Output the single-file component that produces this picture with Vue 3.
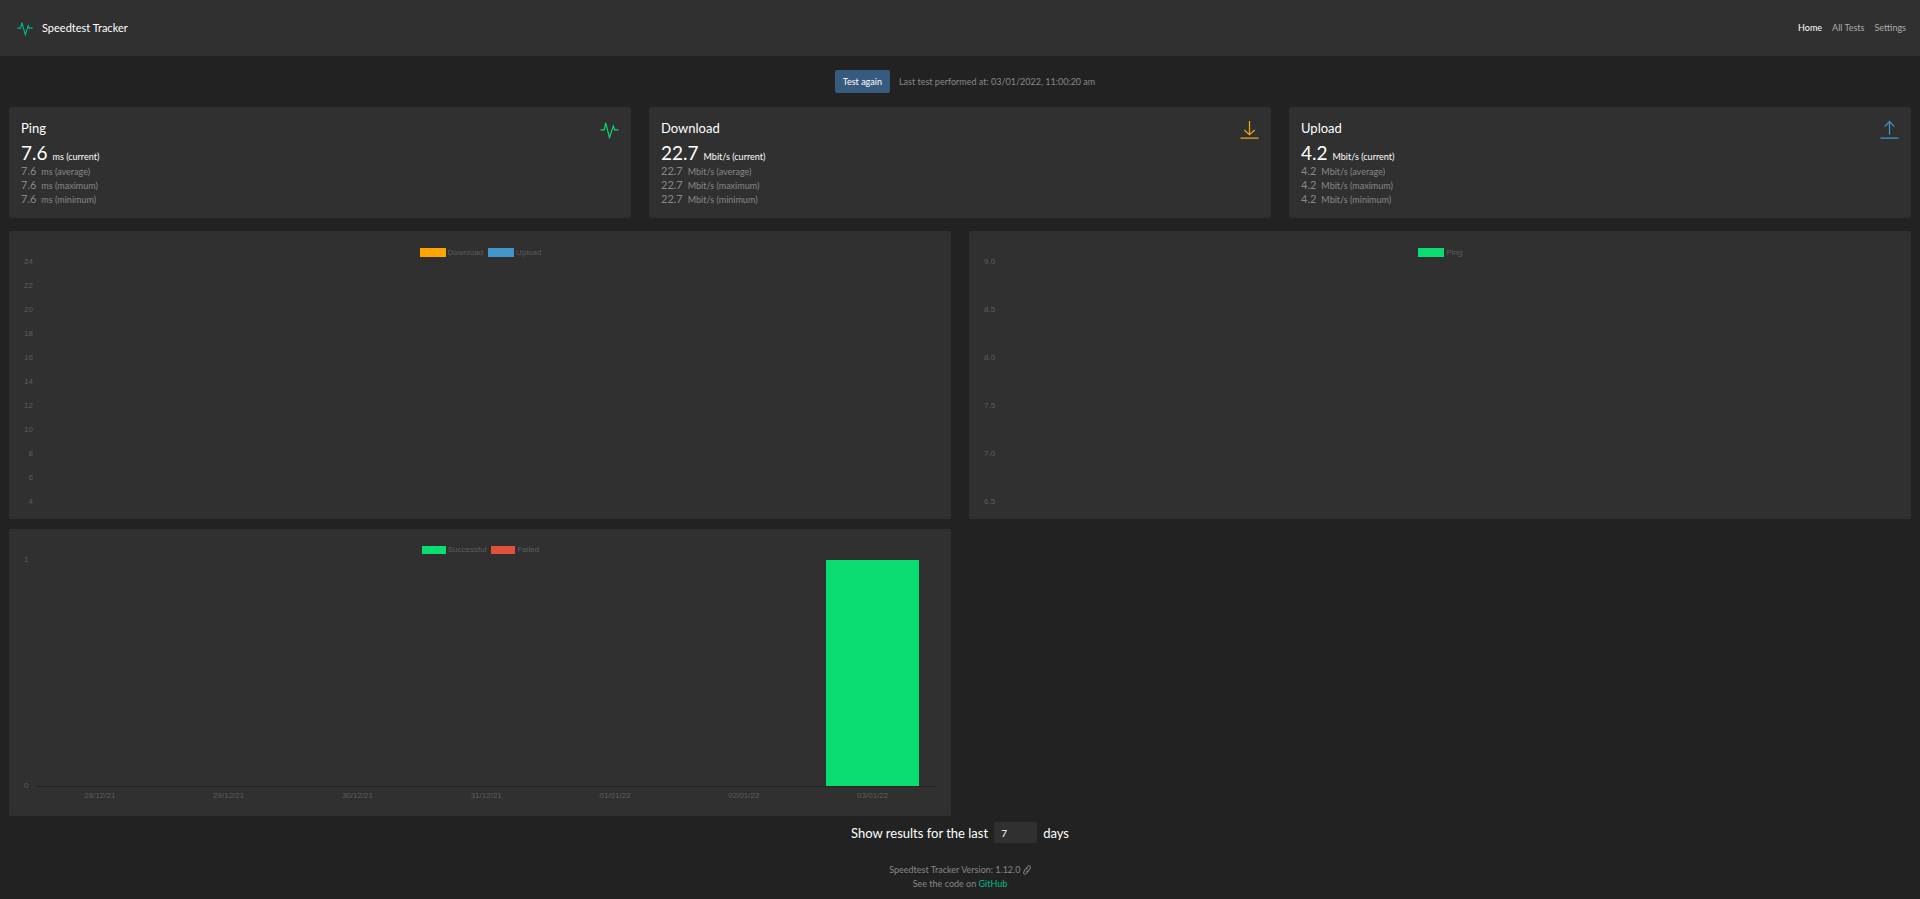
<script setup>
import { ref } from 'vue'

const days = ref(7)

const links = [
  { text: 'Home', active: true },
  { text: 'All Tests', active: false },
  { text: 'Settings', active: false },
]

const stats = [
  { title: 'Ping', unit: 'ms', value: '7.6', icon: 'pulse' },
  { title: 'Download', unit: 'Mbit/s', value: '22.7', icon: 'down' },
  { title: 'Upload', unit: 'Mbit/s', value: '4.2', icon: 'up' },
]

const lineCharts = [
  {
    name: 'Speed',
    legend: [
      { text: 'Download', tone: 'orange' },
      { text: 'Upload', tone: 'blue' },
    ],
    ticks: ['24', '22', '20', '18', '16', '14', '12', '10', '8', '6', '4'],
  },
  {
    name: 'Ping',
    legend: [{ text: 'Ping', tone: 'green' }],
    ticks: ['9.0', '8.5', '8.0', '7.5', '7.0', '6.5'],
  },
]

const results = [
  { date: '28/12/21', count: 0 },
  { date: '29/12/21', count: 0 },
  { date: '30/12/21', count: 0 },
  { date: '31/12/21', count: 0 },
  { date: '01/01/22', count: 0 },
  { date: '02/01/22', count: 0 },
  { date: '03/01/22', count: 1 },
]
</script>

<template>
  <div class="page">
    <header class="navbar">
      <a class="brand" href="#">
        <svg class="brand-icon" viewBox="0 0 20 20" aria-hidden="true">
          <path d="M0.5 9.5H4.5L6 2.5L10.5 18L14 6.5L15.5 9.5H19.5" />
        </svg>
        <span>Speedtest Tracker</span>
      </a>
      <nav class="links">
        <a v-for="l in links" :key="l.text" href="#" :class="{ active: l.active }">{{ l.text }}</a>
      </nav>
    </header>

    <main>
      <div class="actions">
        <button type="button" class="test">Test again</button>
        <span class="last">Last test performed at: 03/01/2022, 11:00:20 am</span>
      </div>

      <section class="stats">
        <article v-for="s in stats" :key="s.title" class="card stat">
          <div class="stat-head">
            <h2>{{ s.title }}</h2>
            <svg class="stat-icon" :class="s.icon" viewBox="0 0 20 20" aria-hidden="true">
              <path v-if="s.icon === 'pulse'" d="M0.5 10.5H4.5L6 3L10 18.5L14 6.5L15.5 10.5H19.5" />
              <path v-else-if="s.icon === 'down'" d="M10 1V15.5M4.5 10.5L10 15.5L15.5 10.5M0.5 19H19.5" />
              <path v-else d="M10 15.5V1.5M5 7L10 1.5L15 7M0.5 19H19.5" />
            </svg>
          </div>
          <p class="current"><span class="num">{{ s.value }}</span><span>{{ s.unit }} (current)</span></p>
          <p v-for="k in ['average', 'maximum', 'minimum']" :key="k" class="other">
            <span class="num">{{ s.value }}</span><span>{{ s.unit }} ({{ k }})</span>
          </p>
        </article>
      </section>

      <section class="charts">
        <article v-for="c in lineCharts" :key="c.name" class="card chart">
          <div class="legend">
            <span v-for="l in c.legend" :key="l.text" class="key"><i :class="l.tone"></i>{{ l.text }}</span>
          </div>
          <div class="ticks line-ticks">
            <span v-for="t in c.ticks" :key="t">{{ t }}</span>
          </div>
        </article>

        <article class="card chart">
          <div class="legend small">
            <span class="key"><i class="green"></i>Successful</span>
            <span class="key"><i class="red"></i>Failed</span>
          </div>
          <div class="bar-body">
            <div class="ticks bar-ticks"><span>1</span><span>0</span></div>
            <div class="plot">
              <div class="bars">
                <div v-for="r in results" :key="r.date" class="slot">
                  <div class="bar" :style="{ height: r.count * 100 + '%' }"></div>
                </div>
              </div>
              <div class="dates">
                <span v-for="r in results" :key="r.date">{{ r.date }}</span>
              </div>
            </div>
          </div>
        </article>
      </section>

      <div class="range">
        <label for="days">Show results for the last</label>
        <input id="days" v-model="days" type="text" inputmode="numeric" />
        <span>days</span>
      </div>
    </main>

    <footer>
      <p>
        Speedtest Tracker Version: 1.12.0
        <svg class="link-icon" viewBox="0 0 8 10" aria-hidden="true">
          <path d="M3 4.5L4.5 1.5Q5.5 0.2 6.8 1Q7.8 1.8 7.2 3L5.5 6.2Q4.6 7.4 3.4 6.6M5 5.2L3.6 8.4Q2.6 9.8 1.2 9Q0.2 8.2 0.8 7L2.5 3.8Q3.4 2.6 4.6 3.4" />
        </svg>
      </p>
      <p>See the code on <a href="#">GitHub</a></p>
    </footer>
  </div>
</template>

<style>
body {
  margin: 0;
  background: #222;
}
</style>

<style scoped>
.page {
  font-family: Lato, sans-serif;
  font-size: 9px;
  line-height: 14px;
  color: #fff;
}
h2,
p {
  margin: 0;
  font-weight: 400;
}
a {
  text-decoration: none;
}
svg {
  fill: none;
  stroke: currentColor;
}
.navbar {
  display: flex;
  align-items: center;
  justify-content: space-between;
  height: 56px;
  padding: 0 14px 0 17px;
  background: #303030;
}
.brand {
  display: flex;
  align-items: center;
  gap: 9px;
  color: #fff;
  font-size: 11px;
}
.brand-icon {
  width: 16px;
  height: 17px;
  color: #00bc8c;
  stroke-width: 1.4;
}
.links {
  display: flex;
  gap: 10px;
}
.links a {
  color: #acacac;
}
.links a.active {
  color: #fff;
}
.actions {
  display: flex;
  align-items: center;
  justify-content: center;
  gap: 9px;
  padding: 14px 0 14px 10px;
}
.test {
  height: 23px;
  padding: 0 8px;
  border: 0;
  border-radius: 2px;
  background: #375a7f;
  color: #fff;
  font: inherit;
}
.last {
  color: #888;
}
.card {
  border-radius: 2px;
  background: #303030;
}
.stats {
  display: grid;
  grid-template-columns: repeat(3, 1fr);
  gap: 18px;
  padding: 0 9px;
}
.stat {
  padding: 13px 12px 12px;
}
.stat-head {
  display: flex;
  justify-content: space-between;
  height: 22px;
}
.stat-head h2 {
  font-size: 13px;
  line-height: 16px;
}
.stat-icon {
  width: 19px;
  height: 19px;
  stroke-width: 1.3;
}
.pulse {
  color: #09d66f;
}
.down {
  color: #efa21a;
}
.up {
  color: #4195c9;
}
.current,
.other {
  display: flex;
  align-items: baseline;
  gap: 5px;
}
.current {
  height: 22px;
  line-height: 22px;
}
.current .num {
  font-size: 19px;
}
.other {
  height: 14px;
  color: #888;
}
.other .num {
  font-size: 11px;
}
.charts {
  display: grid;
  grid-template-columns: repeat(2, 1fr);
  gap: 10px 18px;
  padding: 13px 9px 0;
}
.chart {
  padding: 17px 14px 13px 15px;
  color: #5e5e5e;
  font-family: "Liberation Sans", Arial, sans-serif;
  font-size: 8px;
  line-height: 8px;
}
.legend {
  display: flex;
  justify-content: center;
  gap: 5px;
}
.key {
  display: flex;
  align-items: center;
  gap: 2px;
}
.key i {
  width: 26px;
  height: 9px;
}
.small .key i {
  width: 24px;
  height: 8px;
}
.green {
  background: #09dd72;
}
.orange {
  background: #ffa500;
}
.blue {
  background: #4195c9;
}
.red {
  background: #e2503c;
}
.ticks {
  display: flex;
  flex-direction: column;
  justify-content: space-between;
  width: max-content;
  text-align: right;
}
.line-ticks {
  height: 248px;
  margin-top: 1px;
}
.bar-body {
  display: flex;
  gap: 7px;
  margin: 2px 0 3px;
}
.bar-ticks {
  height: 234px;
}
.plot {
  flex: 1;
  padding-top: 4px;
}
.bars {
  display: flex;
  height: 226px;
  border-bottom: 1px solid #242424;
}
.slot {
  display: flex;
  flex: 1;
  align-items: flex-end;
  justify-content: center;
}
.bar {
  width: 72%;
  background: #09dd72;
}
.dates {
  display: flex;
  padding-top: 5px;
}
.dates span {
  flex: 1;
  text-align: center;
}
.range {
  display: flex;
  align-items: center;
  justify-content: center;
  gap: 6px;
  padding-top: 6px;
  font-size: 13px;
}
.range input {
  box-sizing: border-box;
  width: 43px;
  height: 21px;
  padding: 0 7px;
  border: 0;
  background: #303030;
  color: #fff;
  font-family: inherit;
  font-size: 10px;
}
footer {
  padding-top: 20px;
  color: #888;
  text-align: center;
}
footer a {
  color: #00bc8c;
}
.link-icon {
  width: 8px;
  height: 10px;
  vertical-align: -2px;
}
</style>
